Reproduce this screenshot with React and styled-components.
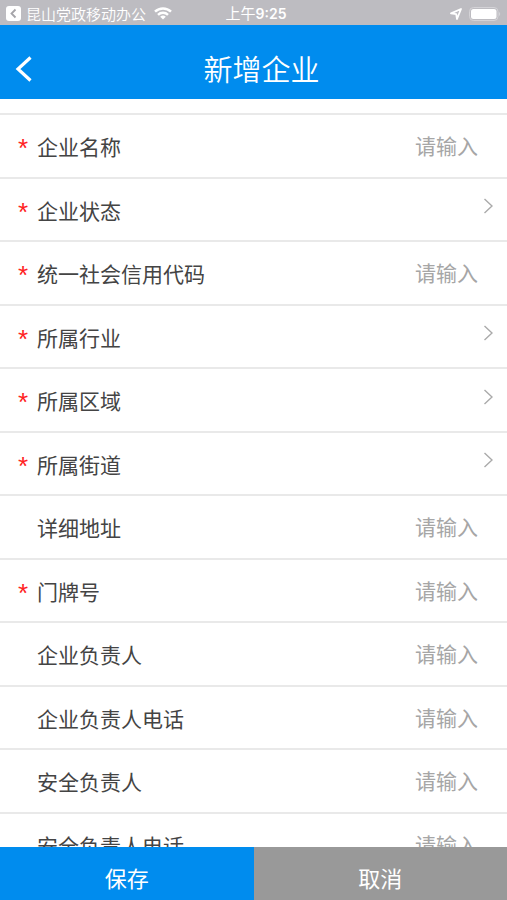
import React from "react";
import styled, { createGlobalStyle } from "styled-components";

const fields = [
  { id: "name", label: "企业名称", required: true },
  { id: "status", label: "企业状态", required: true, picker: true },
  { id: "creditCode", label: "统一社会信用代码", required: true },
  { id: "industry", label: "所属行业", required: true, picker: true },
  { id: "area", label: "所属区域", required: true, picker: true },
  { id: "street", label: "所属街道", required: true, picker: true },
  { id: "address", label: "详细地址" },
  { id: "doorNumber", label: "门牌号", required: true },
  { id: "manager", label: "企业负责人" },
  { id: "managerPhone", label: "企业负责人电话" },
  { id: "safety", label: "安全负责人" },
  { id: "safetyPhone", label: "安全负责人电话" },
];

const StatusBar = () => {
  return (
    <Status>
      <BackToApp>
        <svg width="15" height="15" viewBox="0 0 15 15" aria-hidden="true">
          <rect width="15" height="15" rx="3" fill="#fff" />
          <path
            d="M9.5 3.5L5.5 7.5l4 4"
            fill="none"
            stroke="#a5a4a9"
            strokeWidth="1.8"
          />
        </svg>
        昆山党政移动办公
        <WifiIcon width="18" height="13" viewBox="0 0 18 13" aria-hidden="true">
          <g fill="none" stroke="#fff" strokeWidth="2.5">
            <path d="M1 4.6a11.6 11.6 0 0 1 16 0" />
            <path d="M4 7.8a7.3 7.3 0 0 1 10 0" />
          </g>
          <path d="M9 12.6L6.2 9.8a4 4 0 0 1 5.6 0z" fill="#fff" />
        </WifiIcon>
      </BackToApp>
      <Time>
        上午<strong>9:25</strong>
      </Time>
      <Indicators>
        <svg width="12" height="12" viewBox="0 0 12 12" aria-hidden="true">
          <path
            d="M1 5.4L11 1 7 11 6.2 6.2z"
            fill="none"
            stroke="#fff"
            strokeWidth="1.8"
            strokeLinejoin="round"
          />
        </svg>
        <svg width="32" height="14" viewBox="0 0 32 14" aria-hidden="true">
          <rect
            x="0.5"
            y="0.5"
            width="28.5"
            height="13"
            rx="4"
            fill="none"
            stroke="#d4d3d7"
          />
          <rect x="2" y="2" width="25.5" height="10" rx="2.5" fill="#fff" />
          <path d="M30 5c1.6.6 1.6 3.4 0 4z" fill="#d4d3d7" />
        </svg>
      </Indicators>
    </Status>
  );
};

const Field = ({ id, label, required, picker, value, handleChange }) => {
  return (
    <Row>
      <Star>{required ? "*" : ""}</Star>
      <Label htmlFor={id}>{label}</Label>
      {picker ? (
        <>
          <Picker id={id} value={value} onChange={handleChange}>
            <option value=""></option>
          </Picker>
          <Arrow width="10" height="16" viewBox="0 0 10 16" aria-hidden="true">
            <path
              d="M1.5 1L9 8l-7.5 7"
              fill="none"
              stroke="#aaa"
              strokeWidth="1.4"
            />
          </Arrow>
        </>
      ) : (
        <TextInput
          id={id}
          placeholder="请输入"
          value={value}
          onChange={handleChange}
        />
      )}
    </Row>
  );
};

const App = () => {
  const [values, setValues] = React.useState({});

  return (
    <Wrapper
      onSubmit={(event) => {
        event.preventDefault();
      }}
    >
      <GlobalStyle />
      <StatusBar />
      <Header>
        <BackButton type="button" aria-label="返回">
          <svg width="18" height="26" viewBox="0 0 18 26" aria-hidden="true">
            <path
              d="M15.5 1.5L3 13l12.5 11.5"
              fill="none"
              stroke="#fff"
              strokeWidth="3.2"
            />
          </svg>
        </BackButton>
        <Title>新增企业</Title>
      </Header>
      <List>
        {fields.map((field) => {
          return (
            <Field
              key={field.id}
              {...field}
              value={values[field.id] || ""}
              handleChange={(event) => {
                setValues({ ...values, [field.id]: event.target.value });
              }}
            />
          );
        })}
      </List>
      <Footer>
        <FooterButton type="submit" $color="#008cee">
          保存
        </FooterButton>
        <FooterButton type="button" $color="#999">
          取消
        </FooterButton>
      </Footer>
    </Wrapper>
  );
};

const GlobalStyle = createGlobalStyle`
  * {
    box-sizing: border-box;
  }
  body {
    margin: 0;
    background: #fff;
  }
  body, button, input, select {
    font-family: "Noto Sans CJK SC", sans-serif;
  }
`;

const Wrapper = styled.form`
  display: flex;
  flex-direction: column;
  height: 100vh;
`;

const Status = styled.div`
  display: grid;
  grid-template-columns: 1fr auto 1fr;
  align-items: center;
  flex: none;
  height: 25px;
  padding: 2px 6px 0;
  background: #bdbcc1;
  color: #fff;
  font-size: 15px;
  line-height: 20px;
`;

const BackToApp = styled.div`
  display: flex;
  align-items: center;
  gap: 5px;
  font-weight: 350;
  white-space: nowrap;
`;

const WifiIcon = styled.svg`
  margin-left: 3px;
`;

const Time = styled.div`
  padding-left: 5px;

  strong {
    font-family: Inter, sans-serif;
    font-size: 14px;
    font-weight: 600;
  }
`;

const Indicators = styled.div`
  display: flex;
  justify-content: flex-end;
  align-items: center;
  gap: 7px;
`;

const Header = styled.header`
  display: grid;
  grid-template-columns: 48px 1fr 48px;
  align-items: center;
  flex: none;
  height: 74px;
  padding-top: 12px;
  background: #008cee;
  color: #fff;
`;

const BackButton = styled.button`
  display: flex;
  padding: 2px 0 0 15px;
  border: none;
  background: transparent;
  cursor: pointer;
`;

const Title = styled.h1`
  margin: 0 0 0 16px;
  text-align: center;
  font-size: 29px;
  font-weight: 350;
  line-height: 40px;
`;

const List = styled.div`
  flex: 1;
  min-height: 0;
  padding-top: 14px;
  overflow-y: auto;
  scrollbar-width: none;
`;

const Row = styled.div`
  display: flex;
  align-items: center;
  height: 64px;
  padding: 0 14px 0 18px;
  border-top: 2px solid #e9e9e9;

  &:nth-child(even) {
    height: 63px;
  }
`;

const Star = styled.span`
  flex: none;
  width: 19px;
  padding-top: 4px;
  color: #f22;
  font-family: "Liberation Sans", sans-serif;
  font-size: 26px;
  line-height: 30px;
`;

const Label = styled.label`
  flex: none;
  color: #444;
  font-size: 21px;
  line-height: 30px;
`;

const TextInput = styled.input`
  flex: 1;
  min-width: 0;
  padding: 0;
  margin: 0 15px 2px 0;
  border: none;
  outline: none;
  background: transparent;
  color: #444;
  font-size: 21px;
  line-height: 30px;
  text-align: right;

  &::placeholder {
    color: #a6a6a6;
    opacity: 1;
  }
`;

const Picker = styled.select`
  flex: 1;
  min-width: 0;
  height: 30px;
  border: none;
  outline: none;
  appearance: none;
  background: transparent;
  color: #444;
  font-size: 21px;
  text-align: right;
`;

const Arrow = styled.svg`
  flex: none;
  margin-bottom: 7px;
`;

const Footer = styled.footer`
  display: flex;
  flex: none;
  height: 53px;
`;

const FooterButton = styled.button`
  flex: 1;
  padding: 6px 0 0;
  border: none;
  background: ${(props) => props.$color};
  color: #fff;
  font-size: 22px;
  line-height: 30px;
  cursor: pointer;
`;

export default App;
